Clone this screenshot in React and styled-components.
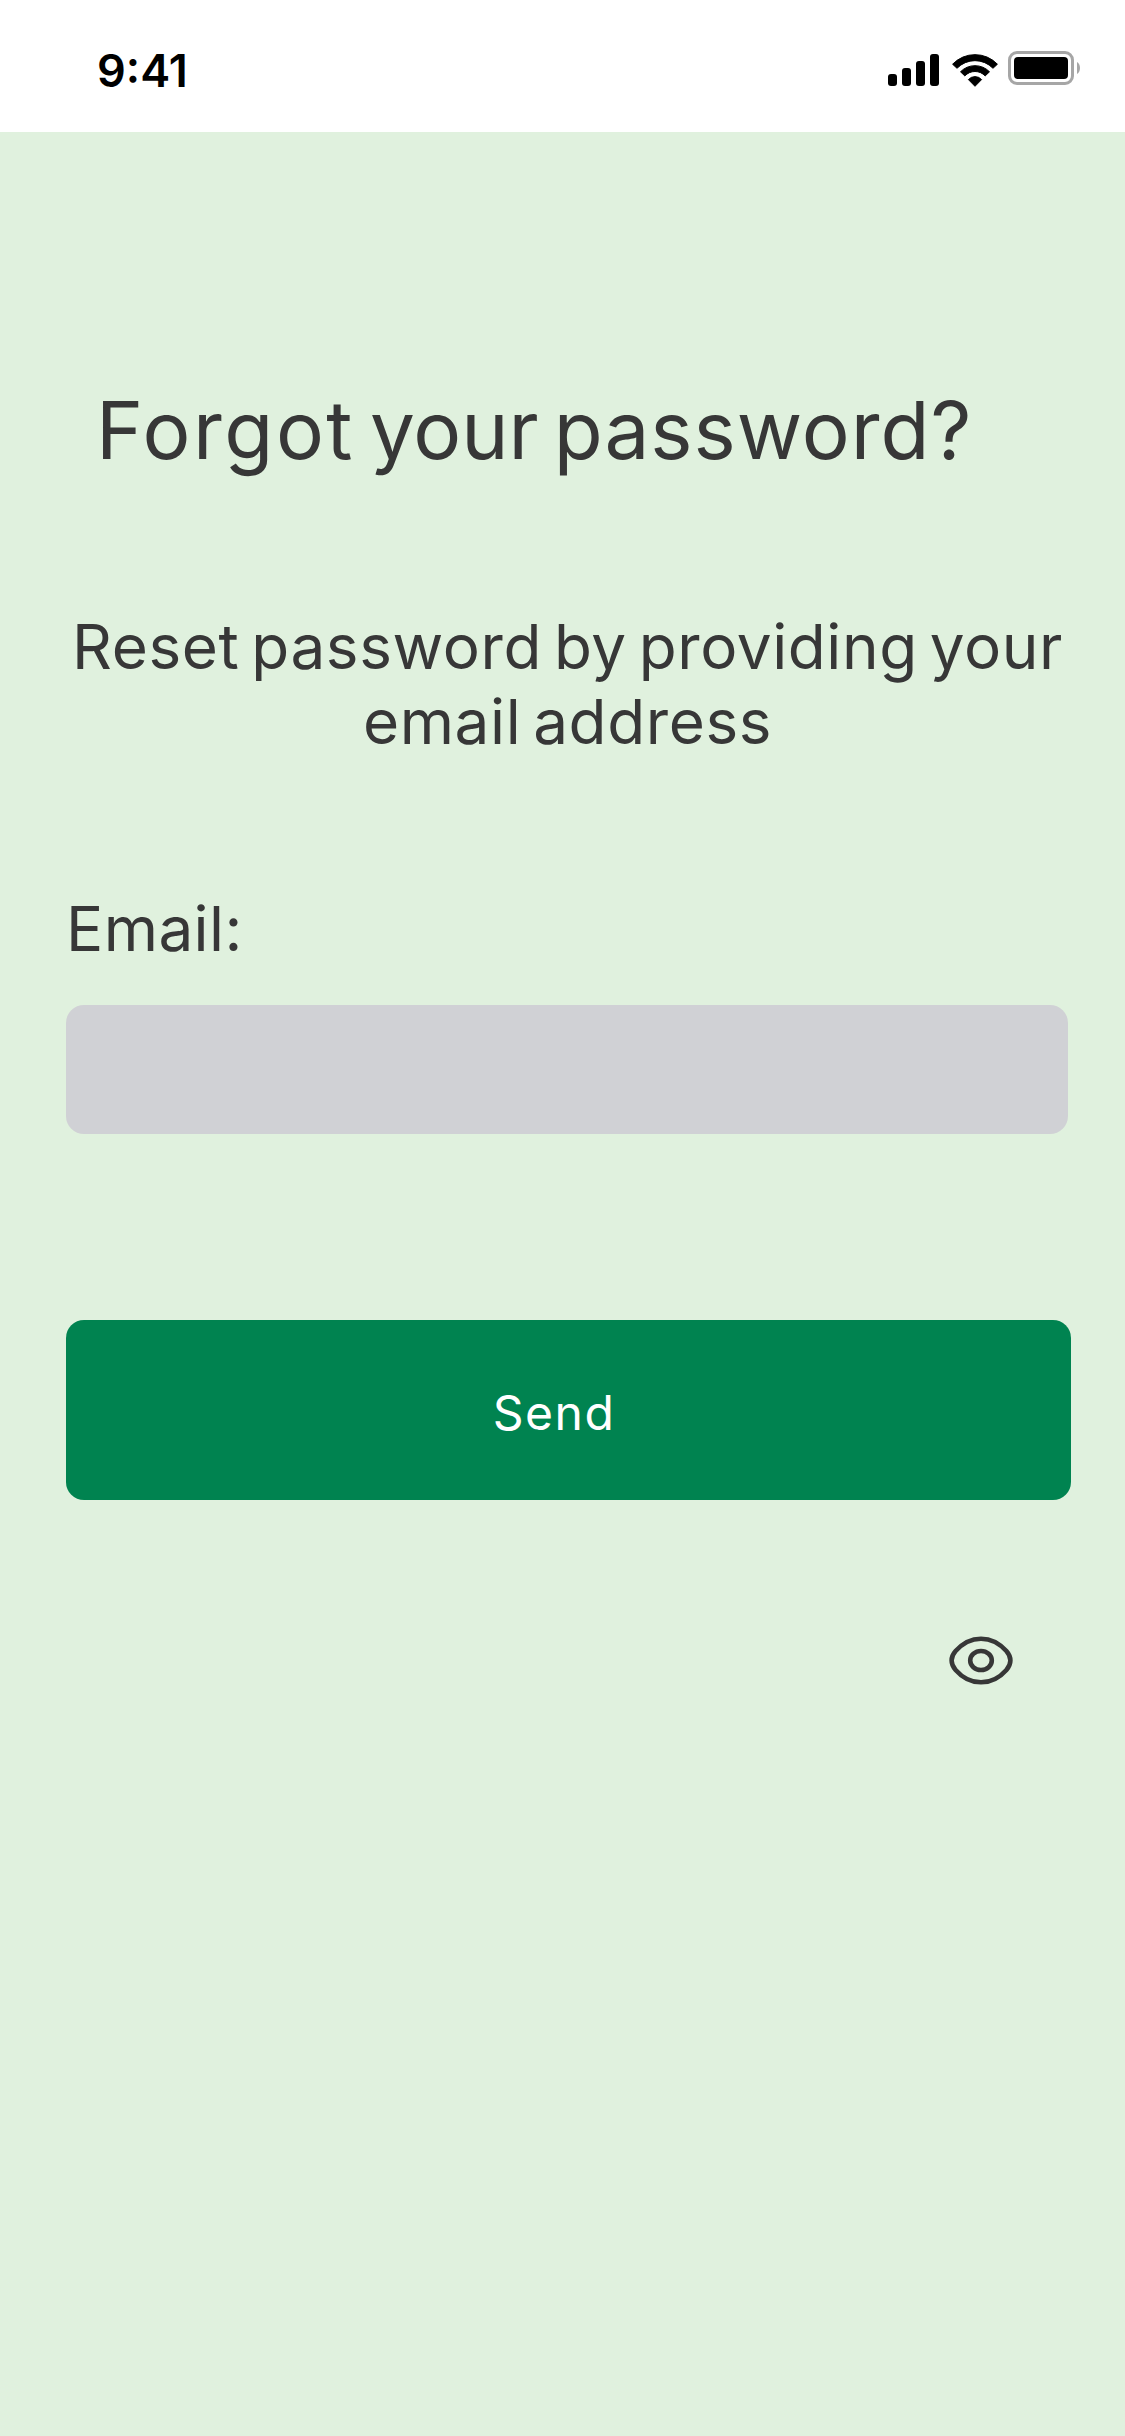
import React from "react";
import styled, { createGlobalStyle } from "styled-components";

const Global = createGlobalStyle`
  * { box-sizing: border-box; }
  body { margin: 0; background: #e0f1de; }
`;

const Screen = styled.div`
  display: flex;
  flex-direction: column;
  width: 1125px;
  height: 2436px;
  background: #e0f1de;
  color: #373737;
  font-family: Inter, "Liberation Sans", sans-serif;
  overflow: hidden;
`;

const StatusBar = styled.header`
  display: flex;
  justify-content: space-between;
  align-items: flex-start;
  height: 132px;
  padding: 43px 45px 0 97px;
  background: #fff;
  color: #000;
`;

const Clock = styled.time`
  font-size: 45px;
  font-weight: 600;
  line-height: 55px;
`;

const StatusIcons = styled.div`
  display: flex;
  align-items: flex-start;
  padding-top: 8px;
`;

const StatusIcon = styled.svg`
  display: block;
  margin-left: ${(p) => p.$gap || 0}px;
`;

const Content = styled.main`
  display: flex;
  flex-direction: column;
  align-items: flex-start;
  width: 1071px;
  padding: 249px 0 0 66px;
`;

const Title = styled.h1`
  margin: 0 0 0 30px;
  font-size: 80px;
  font-weight: 400;
  line-height: 97px;
  word-spacing: -7.6px;
  white-space: nowrap;
`;

const Word = styled.span`
  letter-spacing: ${(p) => p.$tracking}px;
`;

const Subtitle = styled.p`
  width: 1003px;
  margin: 131px 0 0;
  font-size: 62px;
  line-height: 75px;
  letter-spacing: 0.6px;
  word-spacing: -6.1px;
  text-align: center;
`;

const Form = styled.form`
  display: flex;
  flex-direction: column;
  width: 1005px;
  margin: 132px 0 0;
`;

const Label = styled.label`
  font-size: 62px;
  line-height: 75px;
  letter-spacing: 0.4px;
`;

const Field = styled.input`
  width: 1002px;
  height: 129px;
  margin: 39px 0 0;
  padding: 0 36px;
  border: 0;
  border-radius: 18px;
  outline: 0;
  background: #d0d1d5;
  color: inherit;
  font: inherit;
  font-size: 48px;
`;

const SendButton = styled.button`
  height: 180px;
  margin: 186px 0 0;
  padding: 5px 29px 0 0;
  border: 0;
  border-radius: 18px;
  background: #008350;
  color: #fff;
  font-family: inherit;
  font-size: 48px;
  line-height: 59px;
  letter-spacing: 1.5px;
`;

const EyeIcon = styled.svg`
  display: block;
  align-self: flex-end;
  margin: 132px 54px 0 0;
  fill: none;
  stroke: #373737;
  stroke-width: 4.6;
`;

function Signal() {
  return (
    <StatusIcon width="51" height="35" viewBox="0 0 51 35">
      <rect x="0" y="23" width="9" height="12" rx="3" />
      <rect x="14" y="17" width="9" height="18" rx="3" />
      <rect x="28" y="10" width="9" height="25" rx="3" />
      <rect x="42" y="3" width="9" height="32" rx="3" />
    </StatusIcon>
  );
}

function Wifi() {
  return (
    <StatusIcon $gap={12} width="48" height="38" viewBox="0 -2 48 38">
      <g stroke="#000" strokeWidth="1" strokeLinejoin="round">
        <path d="M1.6 11.2A31 31 0 0 1 46.4 11.2L42 15.3A25 25 0 0 0 6 15.3Z" />
        <path d="M9.5 18.8A20.2 20.2 0 0 1 38.5 18.8L34.2 22.9A14 14 0 0 0 13.8 22.9Z" />
        <path d="M17.4 26.6A8.8 8.8 0 0 1 30.6 26.6L24 33.3Z" />
      </g>
    </StatusIcon>
  );
}

function Battery() {
  return (
    <StatusIcon $gap={9} width="72" height="34" viewBox="0 0 72 34">
      <rect x="1.5" y="1.5" width="63" height="31" rx="7.5" fill="none" stroke="#a6a6a6" strokeWidth="3" />
      <rect x="6" y="6" width="54" height="22" rx="4" />
      <path d="M69 11C73 13 73 21 69 23Z" fill="#a6a6a6" />
    </StatusIcon>
  );
}

function Eye() {
  return (
    <EyeIcon width="72" height="57" viewBox="-36 -28.5 72 57">
      <path d="M-29.4 0C-29.4-4-28.2-6.2-25.4-9.4C-19.6-16-10.6-21.8 0-21.8S19.6-16 25.4-9.4C28.2-6.2 29.4-4 29.4 0S28.2 6.2 25.4 9.4C19.6 16 10.6 21.8 0 21.8S-19.6 16-25.4 9.4C-28.2 6.2-29.4 4-29.4 0Z" />
      <ellipse rx="10.8" ry="9.5" />
    </EyeIcon>
  );
}

export default function App() {
  return (
    <>
      <Global />
      <Screen>
        <StatusBar>
          <Clock>9:41</Clock>
          <StatusIcons>
            <Signal />
            <Wifi />
            <Battery />
          </StatusIcons>
        </StatusBar>
        <Content>
          <Title>
            <Word $tracking={2.5}>Forgot</Word> your <Word $tracking={1}>password?</Word>
          </Title>
          <Subtitle>
            Reset password by providing your
            <br />
            email address
          </Subtitle>
          <Form onSubmit={(e) => e.preventDefault()}>
            <Label htmlFor="email">Email:</Label>
            <Field id="email" type="email" />
            <SendButton type="submit">Send</SendButton>
          </Form>
          <Eye />
        </Content>
      </Screen>
    </>
  );
}
